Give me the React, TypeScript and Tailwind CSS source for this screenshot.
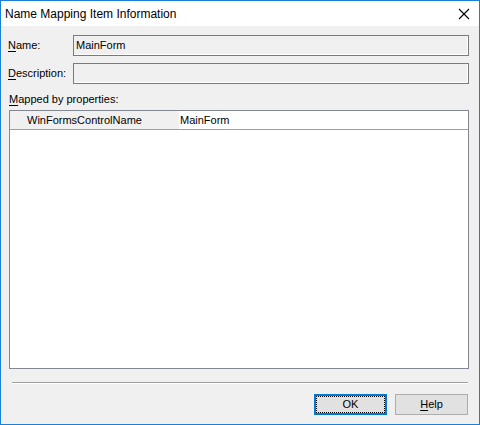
import React from "react";

function Field({ label, keyChar, value }: { label: string; keyChar: string; value?: string }) {
  return (
    <div className="flex h-[21px] items-center">
      <div className="w-[72px] pl-[7px]">
        <span className="underline underline-offset-2">{keyChar}</span>
        {label}
      </div>
      <div className="flex h-[21px] w-[396px] items-center border border-[#7a7a7a] bg-[#f0f0f0] pl-[2px] shadow-[inset_-1px_-1px_0_#ffffff]">
        {value}
      </div>
    </div>
  );
}

export default function App() {
  return (
    <div
      className="flex h-[425px] w-[480px] flex-col border border-[#1a80d6] bg-[#f0f0f0] text-[11px] text-black"
      style={{ fontFamily: '"Liberation Sans", Arial, sans-serif' }}
    >
      {/* title bar */}
      <div className="flex h-[25px] shrink-0 items-center justify-between bg-white pl-[4px] pr-[9px]">
        <span className="text-[12px]">Name Mapping Item Information</span>
        <svg width="12" height="12" viewBox="0 0 12 12">
          <path d="M1 1 L11 11 M11 1 L1 11" stroke="#000" strokeWidth="1.1" />
        </svg>
      </div>

      <div className="flex flex-col">
        <div className="mt-[9px]">
          <Field label="ame:" keyChar="N" value="MainForm" />
        </div>
        <div className="mt-[7px]">
          <Field label="escription:" keyChar="D" />
        </div>

        <div className="flex h-[26px] items-center pl-[8px] pt-[5px]">
          <span>
            <span className="underline underline-offset-2">M</span>apped by properties:
          </span>
        </div>

        {/* property list */}
        <div className="ml-[8px] flex h-[259px] w-[460px] flex-col border border-[#828790] bg-white">
          <div className="flex h-[19px] shrink-0 border-b border-[#a0a0a0]">
            <div className="flex w-[169px] items-center bg-[#f0f0f0] pl-[17px]">WinFormsControlName</div>
            <div className="flex flex-1 items-center pl-[1px]">MainForm</div>
          </div>
        </div>

        <div className="ml-[11px] mt-[13px] h-[2px] w-[456px] border-t border-b border-t-[#a0a0a0] border-b-white" />

        <div className="mt-[10px] flex gap-[8px] pl-[313px]">
          <button className="flex h-[21px] w-[73px] items-center justify-center border-2 border-[#0078d7] bg-[#e1e1e1] p-0">
            <span className="flex h-full w-full items-center justify-center border border-dotted border-black">OK</span>
          </button>
          <button className="flex h-[21px] w-[73px] items-center justify-center border border-[#adadad] bg-[#e1e1e1]">
            <span>
              <span className="underline underline-offset-2">H</span>elp
            </span>
          </button>
        </div>
      </div>
    </div>
  );
}
